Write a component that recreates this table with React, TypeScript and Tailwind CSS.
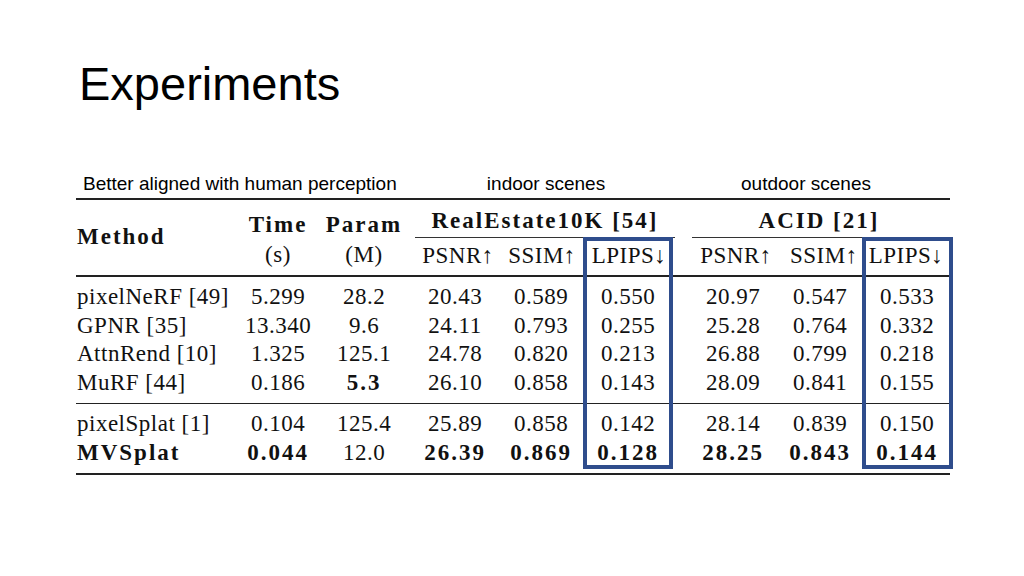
import React from "react";

type Cell = { v: string; b?: boolean };

const rowsA: Cell[][] = [
  [{ v: "pixelNeRF [49]" }, { v: "5.299" }, { v: "28.2" }, { v: "20.43" }, { v: "0.589" }, { v: "0.550" }, { v: "20.97" }, { v: "0.547" }, { v: "0.533" }],
  [{ v: "GPNR [35]" }, { v: "13.340" }, { v: "9.6" }, { v: "24.11" }, { v: "0.793" }, { v: "0.255" }, { v: "25.28" }, { v: "0.764" }, { v: "0.332" }],
  [{ v: "AttnRend [10]" }, { v: "1.325" }, { v: "125.1" }, { v: "24.78" }, { v: "0.820" }, { v: "0.213" }, { v: "26.88" }, { v: "0.799" }, { v: "0.218" }],
  [{ v: "MuRF [44]" }, { v: "0.186" }, { v: "5.3", b: true }, { v: "26.10" }, { v: "0.858" }, { v: "0.143" }, { v: "28.09" }, { v: "0.841" }, { v: "0.155" }],
];

const rowsB: Cell[][] = [
  [{ v: "pixelSplat [1]" }, { v: "0.104" }, { v: "125.4" }, { v: "25.89" }, { v: "0.858" }, { v: "0.142" }, { v: "28.14" }, { v: "0.839" }, { v: "0.150" }],
  [{ v: "MVSplat", b: true }, { v: "0.044", b: true }, { v: "12.0" }, { v: "26.39", b: true }, { v: "0.869", b: true }, { v: "0.128", b: true }, { v: "28.25", b: true }, { v: "0.843", b: true }, { v: "0.144", b: true }],
];

// column boxes for body rows, left edge of table at x=76
const cols = [
  "w-[164px] pl-[1px] text-left",
  "w-[76px] text-center",
  "w-[96px] text-center",
  "w-[86px] text-center",
  "w-[86px] text-center",
  "w-[94px] pr-[6px] text-center",
  "w-[110px] text-center",
  "w-[64px] text-center",
  "w-[98px] pl-[12px] text-center",
];

// latex-ish look: bold is set wider, like cm bold extended
const reg = "text-[23px] tracking-[0.5px]";
const bold = "text-[23px] font-bold tracking-[2px]";

function Row({ cells }: { cells: Cell[] }) {
  return (
    <div className="flex h-[28.5px] items-center">
      {cells.map((c, i) => (
        <div key={i} className={`${cols[i]} ${c.b ? bold : reg} whitespace-nowrap leading-none`}>
          {c.v}
        </div>
      ))}
    </div>
  );
}

export default function App() {
  return (
    <div className="relative h-[576px] w-[1024px] overflow-hidden bg-white text-[#111] font-['Liberation_Sans',Arial,sans-serif]">
      <h1 className="pl-[79px] pt-[58px] text-[47px] leading-[52px] text-black">Experiments</h1>

      <div className="relative ml-[76px] mt-[64px] w-[874px]">
        {/* caption line */}
        <div className="flex h-[24px] items-center pb-[4px] text-[19px] text-black">
          <div className="w-[336px] pl-[7px] whitespace-nowrap">Better aligned with human perception</div>
          <div className="w-[268px] text-center">indoor scenes</div>
          <div className="w-[252px] text-center">outdoor scenes</div>
        </div>

        <div className="font-['Liberation_Serif','Times_New_Roman',serif]">
          <div className="h-[2px] bg-[#222]" />

          {/* header */}
          <div className="flex h-[75px]">
            <div className={`flex w-[164px] items-center pl-[1px] ${bold}`}>Method</div>
            <div className="flex w-[76px] flex-col items-center pt-[10px] leading-[30px]">
              <span className={bold}>Time</span>
              <span className={reg}>(s)</span>
            </div>
            <div className="flex w-[96px] flex-col items-center pt-[10px] leading-[30px]">
              <span className={bold}>Param</span>
              <span className={reg}>(M)</span>
            </div>
            <div className="flex w-[266px] flex-col pt-[6px]">
              <div className={`h-[31px] text-center leading-[30px] ${bold}`}>RealEstate10K [54]</div>
              <div className="mx-[3px] h-px bg-[#333]" />
              <div className={`flex h-[34px] items-center leading-none ${reg}`}>
                <div className="w-[92px] text-center">PSNR↑</div>
                <div className="w-[76px] text-center">SSIM↑</div>
                <div className="w-[98px] text-center">LPIPS↓</div>
              </div>
            </div>
            <div className="w-[4px]" />
            <div className="flex w-[268px] flex-col pt-[6px]">
              <div className={`h-[31px] pl-[6px] text-center leading-[30px] ${bold}`}>ACID [21]</div>
              <div className="ml-[10px] h-px bg-[#333]" />
              <div className={`flex h-[34px] items-center leading-none ${reg}`}>
                <div className="w-[108px] text-center">PSNR↑</div>
                <div className="w-[72px] pr-[10px] text-center">SSIM↑</div>
                <div className="w-[88px] text-center">LPIPS↓</div>
              </div>
            </div>
          </div>

          <div className="h-[1.5px] bg-[#222]" />
          <div className="pt-[6px] pb-[6px]">
            {rowsA.map((r, i) => (
              <Row key={i} cells={r} />
            ))}
          </div>
          <div className="h-px bg-[#222]" />
          <div className="pt-[6px] pb-[6px]">
            {rowsB.map((r, i) => (
              <Row key={i} cells={r} />
            ))}
          </div>
          <div className="h-[2px] bg-[#222]" />
        </div>

        {/* highlight boxes over the LPIPS columns */}
        <div className="absolute left-[507px] top-[63px] h-[232px] w-[90px] border-[4px] border-[#2f4d8c]" />
        <div className="absolute left-[786px] top-[63px] h-[232px] w-[91px] border-[4px] border-[#2f4d8c]" />
      </div>
    </div>
  );
}
